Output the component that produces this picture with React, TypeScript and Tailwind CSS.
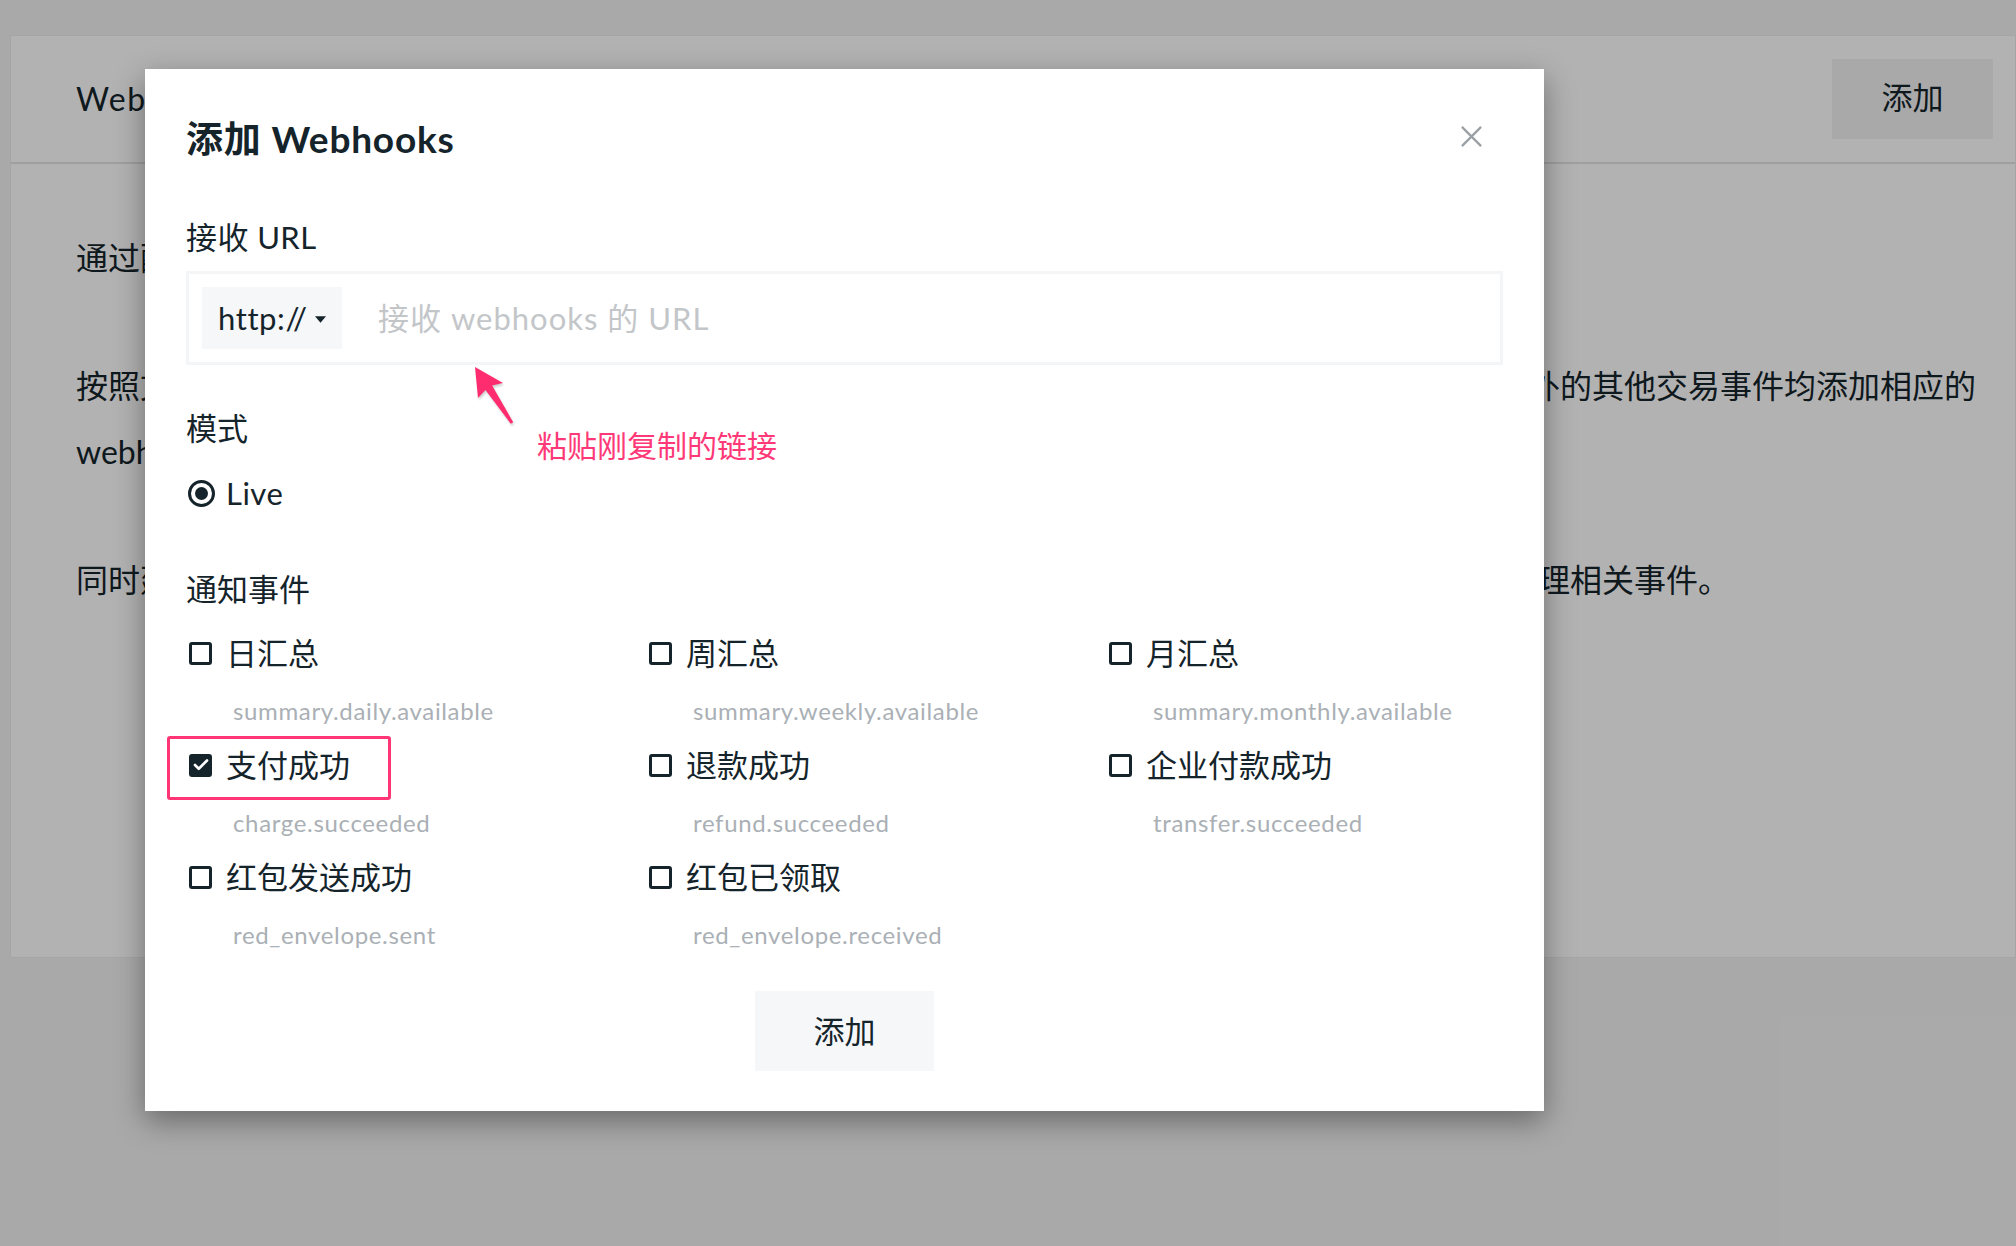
import { Check } from 'lucide-react'

const events = [
  { label: '日汇总', code: 'summary.daily.available', checked: false },
  { label: '周汇总', code: 'summary.weekly.available', checked: false },
  { label: '月汇总', code: 'summary.monthly.available', checked: false },
  { label: '支付成功', code: 'charge.succeeded', checked: true, marked: true },
  { label: '退款成功', code: 'refund.succeeded', checked: false },
  { label: '企业付款成功', code: 'transfer.succeeded', checked: false },
  { label: '红包发送成功', code: 'red_envelope.sent', checked: false },
  { label: '红包已领取', code: 'red_envelope.received', checked: false },
]

function Checkbox({ checked }: { checked: boolean }) {
  if (checked) {
    return (
      <span className="flex items-center justify-center w-[23px] h-[23px] rounded-[3px] bg-[#15242b]">
        <Check className="w-[18px] h-[18px] text-white" strokeWidth={3.5} />
      </span>
    )
  }
  return <span className="block w-[23px] h-[23px] rounded-[3px] border-[3px] border-[#15242b]" />
}

export default function App() {
  return (
    <div className="relative w-[2016px] h-[1246px] overflow-hidden bg-[#f3f3f3] text-[#15242b] font-['Lato','Noto_Sans_CJK_SC',sans-serif]">
      {/* Page behind the dialog */}
      <div className="ml-[10px] mt-[35px] h-[923px] bg-white border border-[#ececec]">
        <div className="flex items-center justify-between h-[128px] border-b-2 border-[#e4e4e4] pl-[65px] pr-[22px]">
          <h1 className="text-[32px] tracking-[1.5px]">Webhooks</h1>
          <button className="w-[161px] h-[80px] bg-[#f2f3f4] text-[31px] leading-[40px] pb-[4px]">添加</button>
        </div>
        <div className="pl-[65px] pr-[39px] pt-[61px] text-[32px] leading-[66px]">
          <p className="whitespace-nowrap">通过配置 Webhooks，Ping++ 会在交易事件发生时向你的服务器推送通知。</p>
          <div className="mt-[62px]">
            <div className="flex justify-between whitespace-nowrap">
              <span>按照文档说明，在管理平台中为应用配置接收通知的地址，并为除了退款成功以</span>
              <span>外的其他交易事件均添加相应的</span>
            </div>
            <p className="whitespace-nowrap">webhooks 通知，以便服务器及时获取交易结果。</p>
          </div>
          <div className="mt-[62px] flex whitespace-nowrap">
            <span className="w-[1462px] shrink-0 overflow-hidden">同时建议在服务器端校验 webhooks 的签名，确保通知来源可信，然后再处</span>
            <span>理相关事件。</span>
          </div>
        </div>
      </div>

      {/* Overlay */}
      <div className="absolute inset-0 bg-black/30" />

      {/* Dialog */}
      <div className="absolute left-[145px] top-[69px] w-[1399px] h-[1042px] bg-white shadow-[0_10px_28px_rgba(0,0,0,0.38)] pl-[41px] pr-[41px] pt-[48px]">
        <div className="flex items-center justify-between h-[44px]">
          <h2 className="text-[37px] font-bold leading-[44px] tracking-[0.8px]">添加 Webhooks</h2>
          <svg viewBox="0 0 24 24" className="w-[23px] h-[23px] mr-[20px] -mt-[6px] text-[#9aa1a6]" fill="none" stroke="currentColor" strokeWidth="2.4">
            <path d="M2 2L22 22M22 2L2 22" />
          </svg>
        </div>

        <div className="mt-[56px] text-[31px] leading-[40px] tracking-[0.4px]">接收 URL</div>
        <div className="mt-[14px] h-[94px] border-[3px] border-[#f3f5f7] flex items-center pl-[13px]">
          <div className="flex items-center gap-[7px] w-[140px] h-[62px] bg-[#f6f7f9] pl-[16px] text-[31px]">
            <span className="tracking-[0.6px]">http://</span>
            <svg viewBox="0 0 10 6" className="w-[11px] h-[7px] mt-[2px]">
              <path d="M0 0H10L5 6Z" fill="#15242b" />
            </svg>
          </div>
          <span className="ml-[36px] text-[31px] tracking-[1px] text-[#c3c6c9]">接收 webhooks 的 URL</span>
        </div>

        <div className="mt-[43px] text-[31px] leading-[40px]">模式</div>
        <div className="mt-[25px] flex items-center h-[40px] text-[31px]">
          <span className="ml-[2px] flex items-center justify-center w-[27px] h-[27px] rounded-full border-[3px] border-[#15242b]">
            <span className="w-[13px] h-[13px] rounded-full bg-[#15242b]" />
          </span>
          <span className="ml-[11px] tracking-[0.5px]">Live</span>
        </div>

        <div className="mt-[56px] text-[31px] leading-[40px]">通知事件</div>
        <div className="mt-[24px] grid grid-cols-[460px_460px_460px] gap-y-[18px]">
          {events.map((ev) => (
            <div key={ev.code} className="relative">
              {ev.marked && (
                <div className="absolute -left-[19px] -top-[9px] w-[224px] h-[64px] border-[3px] border-[#ff3575] rounded-[3px]" />
              )}
              <div className="flex items-center h-[40px] pl-[3px]">
                <Checkbox checked={ev.checked} />
                <span className="ml-[14px] text-[31px]">{ev.label}</span>
              </div>
              <div className="mt-[22px] pl-[47px] h-[32px] leading-[32px] text-[24px] tracking-[0.65px] text-[#aab0b5]">{ev.code}</div>
            </div>
          ))}
        </div>

        <div className="mt-[40px] flex justify-center">
          <button className="w-[179px] h-[80px] bg-[#f6f7f9] text-[31px] leading-[40px]">添加</button>
        </div>

        {/* Annotation */}
        <svg viewBox="0 0 60 72" className="absolute left-[320px] top-[290px] w-[60px] h-[72px] drop-shadow-[1px_2px_1px_rgba(0,0,0,0.2)]">
          <polygon points="10,8 38,24 27.1,26.6 48.2,63.2 45.8,64.8 20.5,31 13,39" fill="#ff2d6f" />
        </svg>
        <div className="absolute left-[392px] top-[356px] text-[30px] leading-[40px] text-[#ff3878]">粘贴刚复制的链接</div>
      </div>
    </div>
  )
}
